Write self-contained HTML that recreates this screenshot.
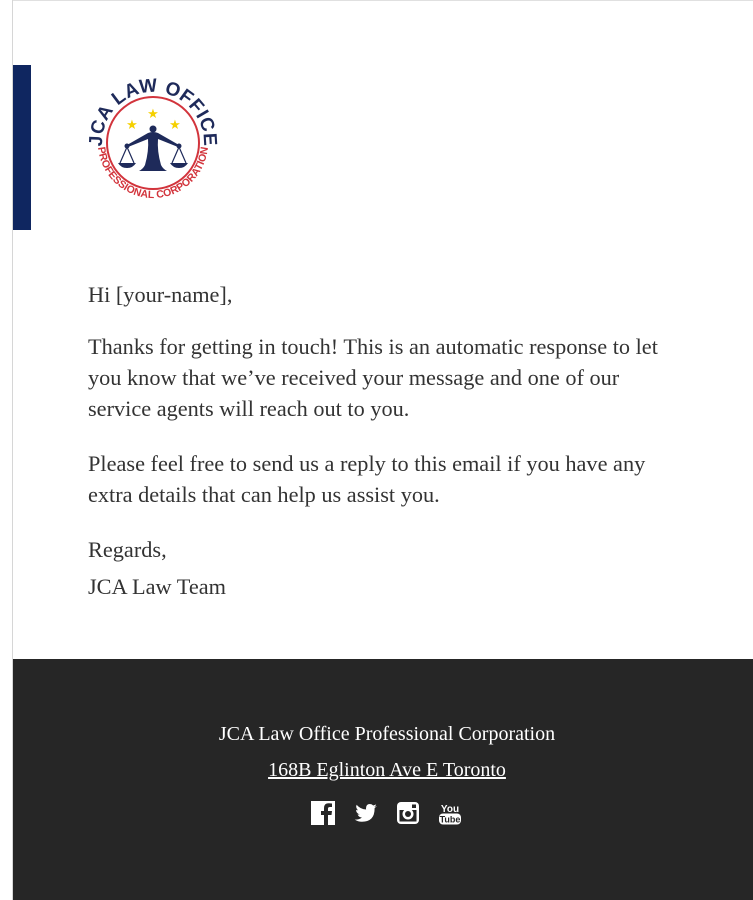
<!DOCTYPE html>
<html><head><meta charset="utf-8"><style>
body{margin:0;width:753px;height:900px;background:#fff;position:relative;overflow:hidden;font-family:"Liberation Serif",serif;}
.lb{position:absolute;left:12px;top:0;width:1px;height:900px;background:#d6d6d6}
.tb{position:absolute;left:12px;top:0;width:741px;height:1px;background:#e0e0e0}
.bar{position:absolute;left:13px;top:65px;width:18px;height:165px;background:#0f2660}
.txt{position:absolute;left:88px;top:279px;width:585px;color:#333;font-size:22.3px;line-height:31px}
.txt p{margin:0 0 24px 0}
.foot{position:absolute;left:13px;top:659px;width:740px;height:241px;background:#262626}
.f1{position:absolute;top:723px;left:17px;width:740px;text-align:center;color:#fff;font-size:20px}
.f2{position:absolute;top:759px;left:17px;width:740px;text-align:center;color:#fff;font-size:20px;text-decoration:underline}
</style></head><body>
<div class="tb"></div><div class="lb"></div><div class="bar"></div>
<svg style="position:absolute;left:83px;top:73px" width="140" height="140" viewBox="0 0 140 140">
<defs>
<path id="top" d="M19,70 A51,51 0 0 1 121,70"/>
<path id="bot" d="M15,70 A55,55 0 0 0 125,70"/>
</defs>
<circle cx="70" cy="70" r="46" fill="none" stroke="#d2343c" stroke-width="2"/>
<text font-family="Liberation Sans,sans-serif" font-weight="bold" font-size="19" fill="#1e2a5a" letter-spacing="0.5"><textPath href="#top" startOffset="50%" text-anchor="middle">JCA LAW OFFICE</textPath></text>
<text font-family="Liberation Sans,sans-serif" font-weight="bold" font-size="10.5" fill="#d2343c"><textPath href="#bot" startOffset="50%" text-anchor="middle">• PROFESSIONAL CORPORATION •</textPath></text>
<g fill="#f5d000" font-size="13" font-family="DejaVu Sans,sans-serif" text-anchor="middle"><text x="70" y="45">★</text><text x="49" y="56">★</text><text x="92" y="56">★</text></g>
<g fill="#1e2a5a">
<circle cx="70" cy="56" r="3.5"/>
<path d="M65,60 Q70,58 75,60 L96,72 L95,74 L75,66 Q74,78 78,92 Q80,96 84,98 L56,98 Q60,96 62,92 Q66,78 65,66 L45,74 L44,72 Z"/>
<circle cx="44" cy="73" r="2.5"/><circle cx="96" cy="73" r="2.5"/>
<path d="M44,74 L37,90 M44,74 L51,90 M96,74 L89,90 M96,74 L103,90" stroke="#1e2a5a" stroke-width="1.2"/>
<path d="M35,90 L53,90 Q50,95 44,95 Q38,95 35,90Z M87,90 L105,90 Q102,95 96,95 Q90,95 87,90Z"/>
</g>
</svg>
<div class="txt">
<p style="margin-bottom:21px">Hi [your-name],</p>
<p>Thanks for getting in touch! This is an automatic response to let you know that we’ve received your message and one of our service agents will reach out to you.</p>
<p>Please feel free to send us a reply to this email if you have any extra details that can help us assist you.</p>
<p style="margin:0">Regards,<br><span style="line-height:44px">JCA Law Team</span></p>
</div>
<div class="foot"></div>
<div class="f1">JCA Law Office Professional Corporation</div>
<div class="f2">168B Eglinton Ave E Toronto</div>
<svg style="position:absolute;left:311px;top:800px" width="155" height="26" viewBox="0 0 155 26">
<rect x="0" y="1" width="24" height="24" fill="#fff"/>
<path d="M17,25 V15 H20.5 L21,11 H17 V8.5 Q17,7 19,7 H21 V3.5 Q19.5,3.3 17.8,3.3 Q13,3.3 13,8 V11 H10 V15 H13 V25Z" fill="#262626"/>
<path fill="#fff" d="M66,6 Q64.6,6.7 63.2,6.9 Q64.7,6 65.2,4.4 Q63.8,5.2 62.2,5.5 Q60.9,4 58.9,4 Q55,4 55,8.5 Q55,9 55.1,9.5 Q49.3,9.2 45.6,4.7 Q44.4,7.8 47,10.2 Q45.9,10.2 45.1,9.7 Q45.1,13.4 48.7,14.3 Q47.6,14.6 46.6,14.4 Q47.6,17.4 50.9,17.5 Q47.7,20 43.7,19.6 Q47,21.7 50.9,21.7 Q63.6,21.7 63.6,8.6 L63.6,8 Q65.1,7 66,6Z"/>
<rect x="86" y="2" width="22" height="22" rx="4" fill="#fff"/>
<rect x="88.5" y="10" width="17" height="11.5" fill="#262626"/>
<circle cx="97" cy="14" r="5.5" fill="#fff"/><circle cx="97" cy="14" r="3" fill="#262626"/>
<rect x="101" y="4.5" width="4" height="3.5" fill="#262626"/>
<text x="139" y="12" font-family="Liberation Sans,sans-serif" font-weight="bold" font-size="10" fill="#fff" text-anchor="middle">You</text>
<rect x="128" y="13.5" width="22" height="11" rx="4" fill="#fff"/>
<text x="139" y="22.5" font-family="Liberation Sans,sans-serif" font-weight="bold" font-size="9" fill="#262626" text-anchor="middle">Tube</text>
</svg>
</body></html>
